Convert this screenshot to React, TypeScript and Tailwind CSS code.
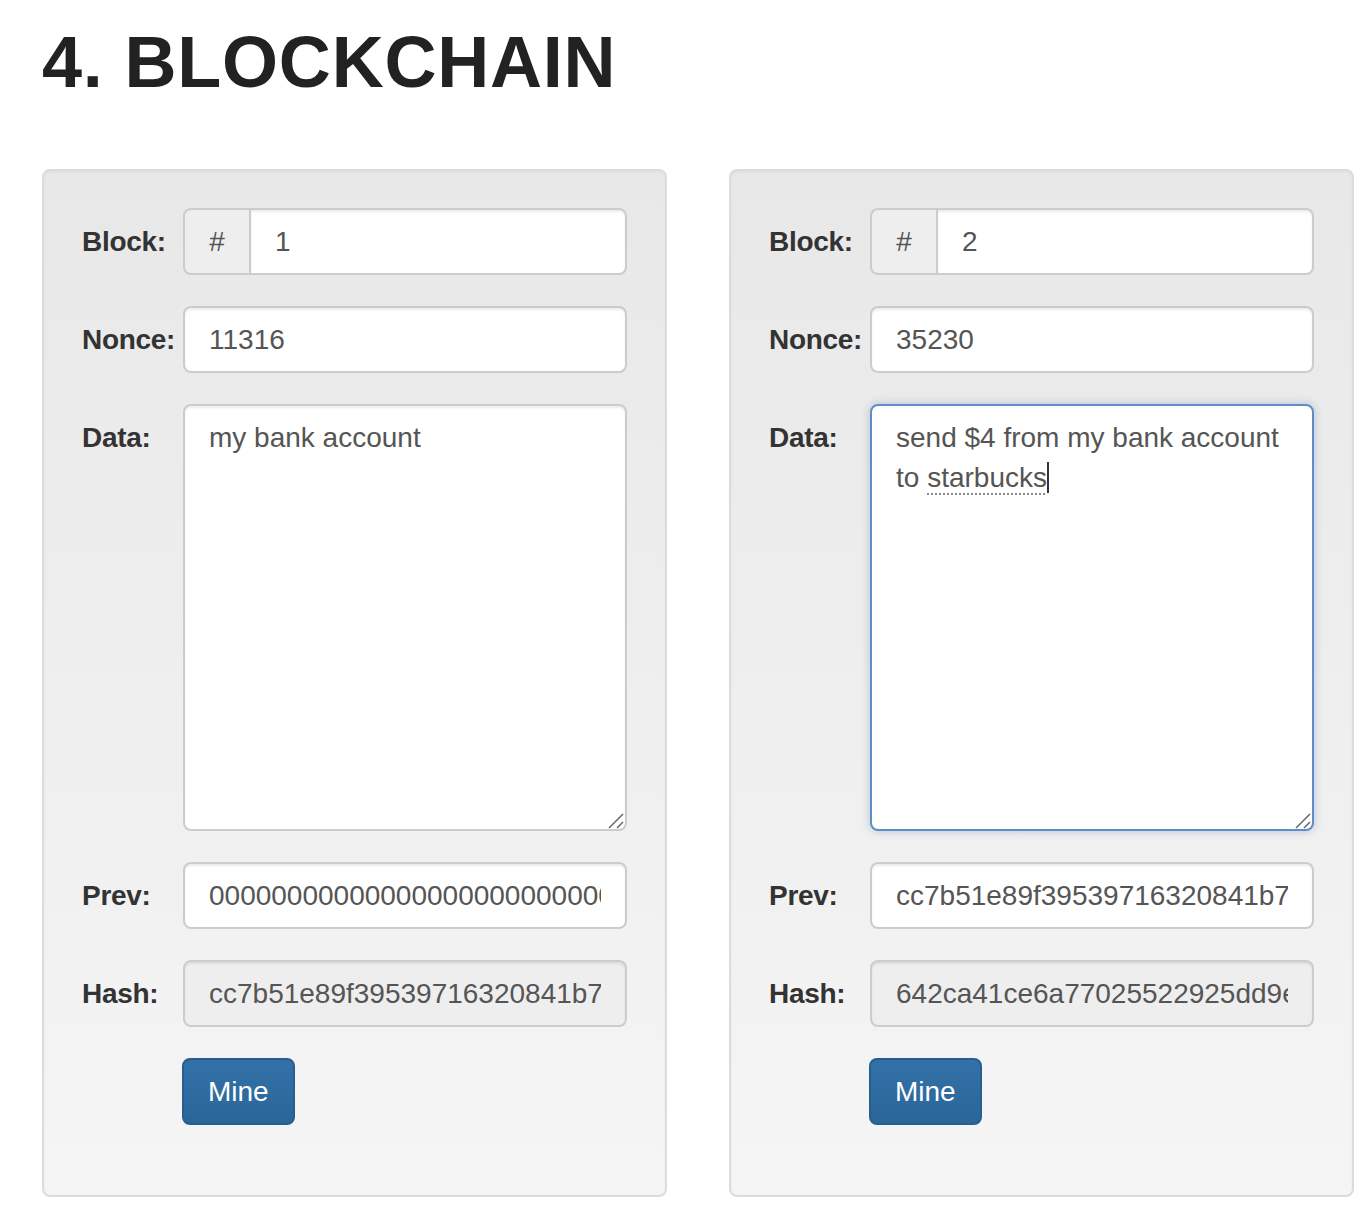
import React from "react";

const font = { fontFamily: '"Liberation Sans", Arial, Helvetica, sans-serif' };

interface BlockData {
  id: number;
  nonce: string;
  data: string[];
  prev: string;
  hash: string;
  focused?: boolean;
}

const blocks: BlockData[] = [
  {
    id: 1,
    nonce: "11316",
    data: ["my bank account"],
    prev: "0000000000000000000000000000000000000000000000000000000000000000",
    hash: "cc7b51e89f39539716320841b7a4d1e5c2f0a8b9d3e6c1f4a7b2d5e8f0c3a6b9",
  },
  {
    id: 2,
    nonce: "35230",
    data: ["send $4 from my bank account", "to starbucks"],
    prev: "cc7b51e89f39539716320841b7a4d1e5c2f0a8b9d3e6c1f4a7b2d5e8f0c3a6b9",
    hash: "642ca41ce6a77025522925dd9e0b3c8f71a2d4e6b8c0f2a4d6e8b0c2d4f6a8b0",
    focused: true,
  },
];

function ResizeHandle() {
  return (
    <svg
      className="absolute right-0 bottom-0 pointer-events-none"
      width="20"
      height="20"
      viewBox="0 0 20 20"
    >
      <line x1="2" y1="17" x2="16" y2="3" stroke="#6b6b6b" strokeWidth="1.6" />
      <line x1="10" y1="17" x2="16" y2="11" stroke="#6b6b6b" strokeWidth="1.6" />
    </svg>
  );
}

function Label({ children, top }: { children: React.ReactNode; top?: boolean }) {
  return (
    <div
      className={`w-[101px] shrink-0 text-[28px] font-bold text-[#333] leading-[40px] tracking-[-0.3px] ${
        top ? "pt-[14px]" : "flex items-center"
      }`}
    >
      {children}
    </div>
  );
}

const inputCls =
  "w-full min-w-0 h-[67px] rounded-[8px] border-2 border-[#ccc] px-[24px] text-[28px] text-[#555] outline-none shadow-[inset_0_2px_2px_rgba(0,0,0,0.075)]";

function Block({ block }: { block: BlockData }) {
  return (
    <div className="w-[625px] shrink-0 rounded-[8px] border-2 border-[#dcdcdc] bg-gradient-to-b from-[#e8e8e8] to-[#f5f5f5] pt-[37px] pb-[70px] px-[38px] shadow-[inset_0_1px_3px_rgba(0,0,0,0.05)]">
      <div className="flex flex-col gap-[31px]">
        <div className="flex">
          <Label>Block:</Label>
          <div className="flex flex-1 min-w-0 h-[67px]">
            <span className="w-[66px] shrink-0 flex items-center justify-center rounded-l-[8px] border-2 border-r-0 border-[#ccc] bg-[#eee] text-[28px] text-[#555]">
              #
            </span>
            <input
              readOnly
              value={String(block.id)}
              className="flex-1 w-0 min-w-0 h-[67px] rounded-r-[8px] border-2 border-[#ccc] bg-white px-[24px] text-[28px] text-[#555] outline-none shadow-[inset_0_2px_2px_rgba(0,0,0,0.075)]"
              style={font}
            />
          </div>
        </div>

        <div className="flex">
          <Label>Nonce:</Label>
          <input readOnly value={block.nonce} className={`${inputCls} bg-white`} style={font} />
        </div>

        <div className="flex">
          <Label top>Data:</Label>
          <div className="relative flex-1 min-w-0">
            {block.focused ? (
              <div className="h-[427px] rounded-[8px] border-2 border-[#5d8fc6] bg-white px-[24px] pt-[12px] text-[28px] leading-[40px] text-[#555] shadow-[0_0_10px_rgba(110,140,175,0.45)]">
                <div className="whitespace-nowrap">{block.data[0]}</div>
                <div className="whitespace-nowrap">
                  to{" "}
                  <span className="underline decoration-dotted decoration-[#8a8a8a] decoration-2 underline-offset-[6px]">
                    starbucks
                  </span>
                  <span className="inline-block w-[2px] h-[31px] bg-[#333] align-[-6px]" />
                </div>
              </div>
            ) : (
              <textarea
                readOnly
                value={block.data.join("\n")}
                className="block w-full h-[427px] resize-none rounded-[8px] border-2 border-[#ccc] bg-white px-[24px] py-[12px] text-[28px] leading-[40px] text-[#555] outline-none shadow-[inset_0_2px_2px_rgba(0,0,0,0.075)]"
                style={font}
              />
            )}
            <ResizeHandle />
          </div>
        </div>

        <div className="flex">
          <Label>Prev:</Label>
          <input readOnly value={block.prev} className={`${inputCls} bg-white`} style={font} />
        </div>

        <div className="flex">
          <Label>Hash:</Label>
          <input readOnly value={block.hash} className={`${inputCls} bg-[#eee]`} style={font} />
        </div>

        <div className="flex">
          <div className="w-[100px] shrink-0" />
          <button
            className="h-[67px] px-[24px] rounded-[8px] border-2 border-[#285e8e] bg-gradient-to-b from-[#3271a8] to-[#2b6699] text-[28px] text-white"
            style={font}
          >
            Mine
          </button>
        </div>
      </div>
    </div>
  );
}

export default function App() {
  return (
    <div className="min-h-[1222px] w-[1372px] bg-white pl-[42px]" style={font}>
      <h1 className="pt-[23px] mb-[67px] text-[72px] font-bold leading-[79px] tracking-[0.8px] text-[#222]">
        4. BLOCKCHAIN
      </h1>
      <div className="flex gap-[62px]">
        {blocks.map((b) => (
          <Block key={b.id} block={b} />
        ))}
      </div>
    </div>
  );
}
